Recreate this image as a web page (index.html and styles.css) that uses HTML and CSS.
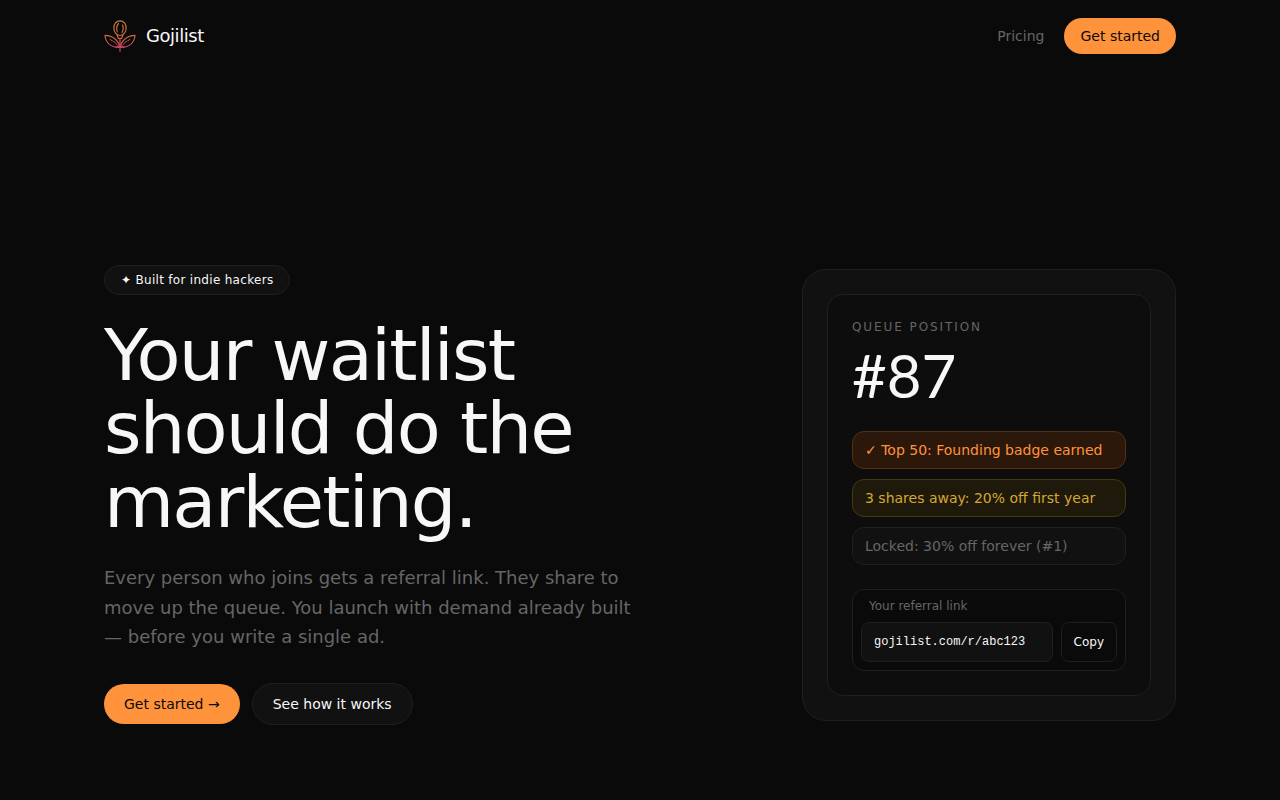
FILE: index.html
```html
<!DOCTYPE html>
<html lang="en">
<head>
<meta charset="utf-8">
<meta name="viewport" content="width=device-width, initial-scale=1">
<title>Gojilist</title>
<link rel="stylesheet" href="styles.css">
</head>
<body>
<header class="container header">
  <a class="brand" href="#">
    <svg class="brand-mark" viewBox="0 0 32 32" fill="none" stroke="url(#flame)" stroke-width="1.2" stroke-linecap="round" stroke-linejoin="round" aria-hidden="true">
      <defs>
        <linearGradient id="flame" gradientUnits="userSpaceOnUse" x1="0" y1="0" x2="0" y2="32">
          <stop offset="0.1" stop-color="#c9783c"/>
          <stop offset="0.6" stop-color="#c4623f"/>
          <stop offset="0.85" stop-color="#cc3f6c"/>
          <stop offset="1" stop-color="#7a5a5c"/>
        </linearGradient>
      </defs>
      <path d="M16 0.800C12.200 0.800 9.800 4 9.800 8C9.800 11.800 12.300 15.500 16 15.500C19.700 15.500 22.200 11.800 22.200 8C22.200 4 19.700 0.800 16 0.800Z"/>
      <path d="M14.500 3.500C12.800 5.500 12.300 9 13.300 12M18.500 5C19.500 7.500 19.300 10.500 18 12.500"/>
      <path d="M13 15L14.300 18.300H17.700L19 15M16 18.300V31.500"/>
      <path d="M16 27.500C14.500 20 8.500 15.500 1 15.300C1.500 22.500 6.500 27.500 16 27.500Z"/>
      <path d="M16 27.500C17.500 20 23.500 15.500 31 15.300C30.500 22.500 25.500 27.500 16 27.500Z"/>
      <path stroke-width="0.9" d="M6 19.500C9.500 21 12.500 23.500 16 27.500C19.500 23.500 22.500 21 26 19.500"/>
      <path stroke-width="1.600" d="M12 27H20"/>
    </svg>
    <span>Gojilist</span>
  </a>
  <nav class="nav">
    <a class="nav-link" href="#">Pricing</a>
    <a class="button button-primary button-small" href="#">Get started</a>
  </nav>
</header>
<main class="container hero">
  <section class="intro">
    <p class="badge">✦ Built for indie hackers</p>
    <h1 class="title">Your waitlist should do the marketing.</h1>
    <p class="lead">Every person who joins gets a referral link. They share to move up the queue. You launch with demand already built — before you write a single ad.</p>
    <div class="actions">
      <a class="button button-primary" href="#">Get started →</a>
      <a class="button button-secondary" href="#">See how it works</a>
    </div>
  </section>
  <section class="card">
    <div class="panel">
      <p class="eyebrow">Queue position</p>
      <p class="position">#87</p>
      <ul class="rewards">
        <li class="reward reward-earned">✓ Top 50: Founding badge earned</li>
        <li class="reward reward-next">3 shares away: 20% off first year</li>
        <li class="reward reward-locked">Locked: 30% off forever (#1)</li>
      </ul>
      <div class="referral">
        <label class="referral-label" for="referral-link">Your referral link</label>
        <div class="referral-row">
          <input class="referral-input" id="referral-link" type="text" value="gojilist.com/r/abc123" readonly>
          <button class="copy" type="button">Copy</button>
        </div>
      </div>
    </div>
  </section>
</main>
</body>
</html>
```
FILE: styles.css
```css
* {
  box-sizing: border-box;
}

body {
  margin: 0;
  background: #0a0a0a;
  color: #f7f7f7;
  font-family: "DejaVu Sans", sans-serif;
  font-size: 14px;
  line-height: 20px;
}

h1, p, ul {
  margin: 0;
  padding: 0;
}

a {
  color: inherit;
  text-decoration: none;
}

.container {
  max-width: 1120px;
  margin: 0 auto;
  padding: 0 24px;
}

.header {
  display: flex;
  align-items: center;
  justify-content: space-between;
  padding-top: 18px;
  padding-bottom: 18px;
}

.brand {
  display: flex;
  align-items: center;
  gap: 10px;
  font-size: 18px;
  letter-spacing: -0.025em;
}

.brand-mark {
  width: 32px;
  height: 32px;
}

.nav {
  display: flex;
  align-items: center;
  gap: 20px;
}

.nav-link {
  color: #666;
}

.button {
  padding: 10px 20px;
  border-radius: 999px;
  white-space: nowrap;
}

.button-primary {
  background: #ff933b;
  color: #0a0a0a;
}

.button-secondary {
  border: 1px solid #1f1f1f;
  background: #111;
}

.button-small {
  padding: 8px 16px;
}

.hero {
  display: flex;
  align-items: center;
  justify-content: space-between;
  gap: 48px;
  padding-top: 193px;
  padding-bottom: 75px;
}

.intro {
  flex: 0 1 544px;
}

.badge {
  width: fit-content;
  padding: 6px 16px;
  border: 1px solid #1f1f1f;
  border-radius: 999px;
  background: #111;
  font-size: 12px;
  line-height: 16px;
  letter-spacing: 0.025em;
}

.title {
  margin-top: 24px;
  font-size: 72px;
  font-weight: 400;
  line-height: 1.02;
  letter-spacing: -0.025em;
}

.lead {
  margin-top: 24px;
  color: #666;
  font-size: 18px;
  line-height: 1.625;
}

.actions {
  display: flex;
  align-items: center;
  gap: 12px;
  margin-top: 32px;
}

.card {
  flex: 0 1 374px;
  padding: 24px;
  border: 1px solid #1f1f1f;
  border-radius: 24px;
  background: #111;
}

.panel {
  padding: 24px;
  border: 1px solid #1f1f1f;
  border-radius: 16px;
  background: #0d0d0d;
}

.eyebrow {
  color: #666;
  font-size: 12px;
  line-height: 16px;
  letter-spacing: 0.16em;
  text-transform: uppercase;
}

.position {
  margin-top: 8px;
  font-family: Lato, sans-serif;
  font-size: 60px;
  line-height: 64px;
}

.rewards {
  display: grid;
  gap: 10px;
  margin-top: 24px;
  list-style: none;
}

.reward {
  padding: 8px 12px;
  border: 1px solid;
  border-radius: 12px;
}

.reward-earned {
  border-color: #57300f;
  background: #2c170b;
  color: #ff933b;
}

.reward-next {
  border-color: #463a10;
  background: #1f190b;
  color: #d4a832;
}

.reward-locked {
  border-color: #1f1f1f;
  background: #111;
  color: #666;
}

.referral {
  margin-top: 24px;
  padding: 8px;
  border: 1px solid #1f1f1f;
  border-radius: 12px;
  background: #0a0a0a;
  font-size: 12px;
  line-height: 16px;
}

.referral-label {
  display: block;
  padding: 0 8px;
  color: #666;
}

.referral-row {
  display: flex;
  gap: 8px;
  margin-top: 8px;
}

.referral-input {
  flex: 1;
  min-width: 0;
  height: 40px;
  padding: 0 12px;
  border: 1px solid #1f1f1f;
  border-radius: 8px;
  background: #111;
  color: #f7f7f7;
  font-family: "Liberation Mono", monospace;
  font-size: 12px;
}

.copy {
  padding: 0 12px;
  border: 1px solid #1f1f1f;
  border-radius: 8px;
  background: #0a0a0a;
  color: #f7f7f7;
  font-family: inherit;
  font-size: 12px;
  cursor: pointer;
}
```
